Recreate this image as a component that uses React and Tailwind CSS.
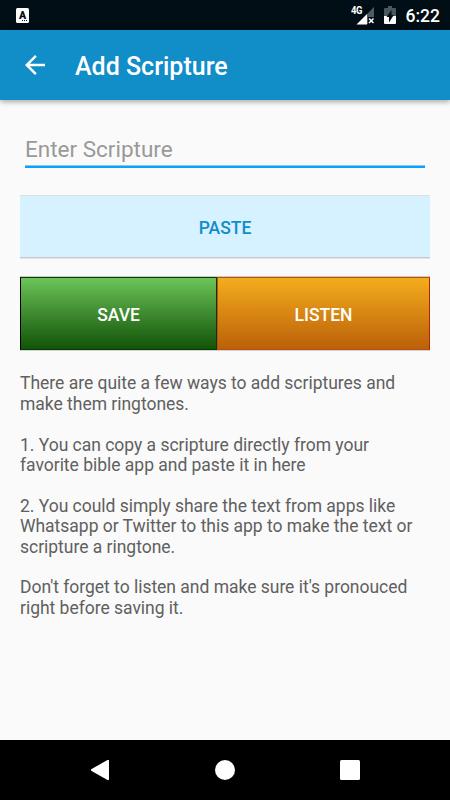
import React from "react";

const tips = [
  ["There are quite a few ways to add scriptures and", "make them ringtones."],
  ["1. You can copy a scripture directly from your", "favorite bible app and paste it in here"],
  [
    "2. You could simply share the text from apps like",
    "Whatsapp or Twitter to this app to make the text or",
    "scripture a ringtone.",
  ],
  ["Don't forget to listen and make sure it's pronouced", "right before saving it."],
];

function StatusBar() {
  return (
    <div className="flex h-[30px] shrink-0 items-center bg-[#020e15] pl-4 pr-[10px] text-white">
      <div className="flex h-[15px] w-[13px] flex-col items-center rounded-[1.5px] bg-white text-[#020e15]">
        <span className="h-[12px] text-[10.5px] font-black leading-[16px]">A</span>
        <svg className="ml-[5px] mt-[0.5px]" width="6" height="2" viewBox="0 0 6 2" fill="currentColor">
          <path d="M0 0h1v1H0zM2 0h1v1H2zM4 0h1v1H4z" />
        </svg>
      </div>

      <div className="ml-auto flex items-center">
        <div className="relative h-[20px] w-[23px]">
          <span className="absolute left-0 top-0 origin-left scale-x-[0.86] text-[11px] font-bold leading-[11px] tracking-[-0.5px]">
            4G
          </span>
          <svg className="absolute inset-0" width="23" height="20" viewBox="0 0 23 20">
            <path d="M23 2v10h-5v7h-2V9z" fill="#505a60" />
            <path d="M16 9v10.500H5.500z" fill="#fff" />
            <path d="M17 12h6v8h-6z" fill="#020e15" />
            <path d="M18 13.500l4.500 4.500M22.500 13.500L18 18" stroke="#fff" strokeWidth="1.500" />
          </svg>
        </div>
        <svg className="ml-[10px]" width="13" height="18" viewBox="0 0 13 18">
          <path d="M4 0h4v2h3q1 0 1 1v7H0V3q0-1 1-1h3z" fill="#4d565b" />
          <path d="M0 10h12v7q0 1-1 1H1q-1 0-1-1z" fill="#fff" />
          <path d="M7.500 4L2.500 11H5v5.500L9.800 9H7.500z" fill="#020e15" />
        </svg>
        <span className="ml-[9px] mt-[2px] text-[17.5px] font-medium leading-5">6:22</span>
      </div>
    </div>
  );
}

function Header() {
  return (
    <header className="flex h-[70px] shrink-0 items-center bg-[#118dc8] pl-[25px] text-white shadow-[0_2px_5px_rgba(0,0,0,0.32)]">
      <svg width="20" height="20" viewBox="4 4 16 16" fill="currentColor" className="-mt-[1px]">
        <path d="M20 11H7.83l5.59-5.59L12 4l-8 8 8 8 1.41-1.41L7.83 13H20v-2z" />
      </svg>
      <h1 className="ml-[30px] mt-[3px] text-[25px] font-medium leading-[30px]">Add Scripture</h1>
    </header>
  );
}

function NavBar() {
  return (
    <nav className="flex h-[60px] shrink-0 items-center bg-black text-white">
      <svg className="ml-[90px]" width="20" height="20" viewBox="0 0 20 20" fill="currentColor">
        <path d="M17.500 0q1.500-.600 1.500 1v18q0 1.600-1.500 1L1.600 11q-1.400-1 0-2z" />
      </svg>
      <div className="ml-[105px] size-5 rounded-full bg-white" />
      <div className="ml-[105px] size-[19.5px] rounded-[1.5px] bg-white" />
    </nav>
  );
}

export default function App() {
  return (
    <div className="flex h-screen w-full flex-col overflow-hidden bg-[#fafafa] font-['Roboto',sans-serif]">
      <StatusBar />
      <Header />

      <main className="flex-1 px-5 pt-[30px]">
        <div className="mx-[5px] flex h-[38px] items-center border-b-2 border-[#05a5ff] shadow-[inset_0_-1px_0_#8fc4e6]">
          <input
            className="mt-[2px] w-full text-[22.5px] leading-[26px] outline-none placeholder:text-[#999999]"
            placeholder="Enter Scripture"
          />
        </div>

        <button className="mt-7 flex h-[61px] w-full items-center justify-center bg-[#d6f1ff] pt-[3px] text-[17.5px] font-medium text-[#118dc8] shadow-[0_-1px_0_#dedede,0_1px_0_#c4c8ca,0_2px_0_#e6e6e6]">
          PASTE
        </button>

        <div className="mt-5 flex h-[73px] text-[17.5px] font-medium text-white shadow-[0_-1px_0_#c9c9cb,0_1px_0_#d2d2d4]">
          <button className="w-[197px] border border-[#043b08] border-l-black bg-linear-to-b from-[#6cc558] to-[#105405] pt-[3px]">
            SAVE
          </button>
          <button className="flex-1 border border-[#bd4e0b] border-r-[#b32508] bg-linear-to-b from-[#f4ad1d] to-[#bb6009] pt-[3px]">
            LISTEN
          </button>
        </div>

        <div className="mt-[23.3px] flex flex-col gap-[20.4px] text-[17.5px] leading-[20.4px] tracking-[-0.02px] text-[#606060]">
          {tips.map((lines) => (
            <p key={lines[0]} className="whitespace-nowrap">
              {lines.map((line) => (
                <span key={line} className="block">
                  {line}
                </span>
              ))}
            </p>
          ))}
        </div>
      </main>

      <NavBar />
    </div>
  );
}
